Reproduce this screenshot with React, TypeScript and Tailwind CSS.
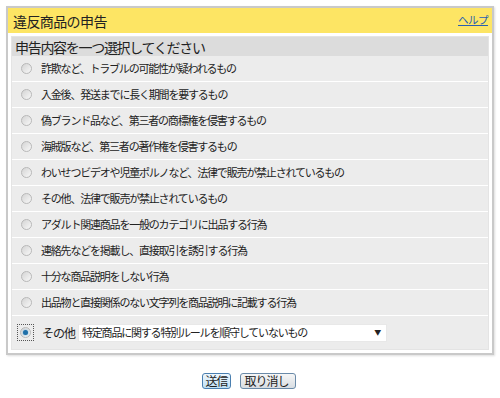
import React from "react";

const items = [
  "詐欺など、トラブルの可能性が疑われるもの",
  "入金後、発送までに長く期間を要するもの",
  "偽ブランド品など、第三者の商標権を侵害するもの",
  "海賊版など、第三者の著作権を侵害するもの",
  "わいせつビデオや児童ポルノなど、法律で販売が禁止されているもの",
  "その他、法律で販売が禁止されているもの",
  "アダルト関連商品を一般のカテゴリに出品する行為",
  "連絡先などを掲載し、直接取引を誘引する行為",
  "十分な商品説明をしない行為",
  "出品物と直接関係のない文字列を商品説明に記載する行為",
];

function Radio({ checked }: { checked?: boolean }) {
  return (
    <span className="relative inline-flex h-[11px] w-[11px] shrink-0 items-center justify-center rounded-full border border-[#b8b8b8] bg-gradient-to-br from-[#d4d4d4] to-[#f8f8f8]">
      {checked && <span className="h-[5px] w-[5px] rounded-full bg-[#1f6fa8] shadow-[0_0_2px_#5aa9e0]" />}
    </span>
  );
}

export default function App() {
  return (
    <div
      className="h-[398px] w-[500px] bg-white text-[#222]"
      style={{ fontFamily: '"Noto Sans CJK JP", "Noto Sans", sans-serif' }}
    >
      <div className="px-[6px] pt-[6px]">
        <div className="border-2 border-[#c9c9c9] shadow-[1px_1px_2px_#ddd]">
          <div className="flex h-[25px] items-center justify-between bg-[#fde564] pl-[5px] pr-[4px]">
            <span className="text-[14px] leading-none tracking-[-0.6px] text-[#222]">違反商品の申告</span>
            <a className="text-[10.5px] leading-none tracking-[-0.5px] text-[#2a5fb0] underline">ヘルプ</a>
          </div>
          <div className="bg-white px-[3px] pb-[3px] pt-[3px]">
            <div className="border border-[#e4e4e4]">
              <div className="flex h-[19px] items-center bg-[#dcdcdc] pl-[3px] text-[14px] leading-none tracking-[-1.3px] text-[#222]">
                申告内容を一つ選択してください
              </div>
              {items.map((t) => (
                <div key={t} className="flex h-[26px] items-center gap-[9px] border-b border-white bg-[#ececec] pl-[9px] text-[11px] leading-none tracking-[-1.2px]">
                  <Radio />
                  <span>{t}</span>
                </div>
              ))}
              <div className="flex h-[33px] items-center bg-[#ececec] pl-[5px] text-[11.5px] leading-none tracking-[-1px]">
                <span className="flex h-[17px] w-[17px] items-center justify-center border border-dotted border-[#555]">
                  <Radio checked />
                </span>
                <span className="ml-[8px] text-[12px]">その他</span>
                <div className="ml-[3px] flex h-[18px] w-[309px] items-center justify-between border border-[#e8e8e8] bg-white pl-[3px] pr-[6px] text-[11px] tracking-[-1.2px]">
                  <span>特定商品に関する特別ルールを順守していないもの</span>
                  <span className="text-[7px]">▼</span>
                </div>
              </div>
            </div>
          </div>
        </div>
      </div>
      <div className="mt-[18px] flex justify-center gap-[9px] pr-[2px]">
        <button className="h-[16px] rounded-[3px] border border-[#4a7fb0] bg-gradient-to-b from-[#eef7fd] to-[#bfe0f5] px-[2px] text-[12px] leading-none tracking-[-1px] text-[#222]">送信</button>
        <button className="h-[16px] rounded-[3px] border border-[#6a8aa8] bg-gradient-to-b from-[#f6f6f6] to-[#d8dde2] pl-[4px] pr-[6px] text-[12px] leading-none tracking-[-1px] text-[#222]">取り消し</button>
      </div>
    </div>
  );
}
